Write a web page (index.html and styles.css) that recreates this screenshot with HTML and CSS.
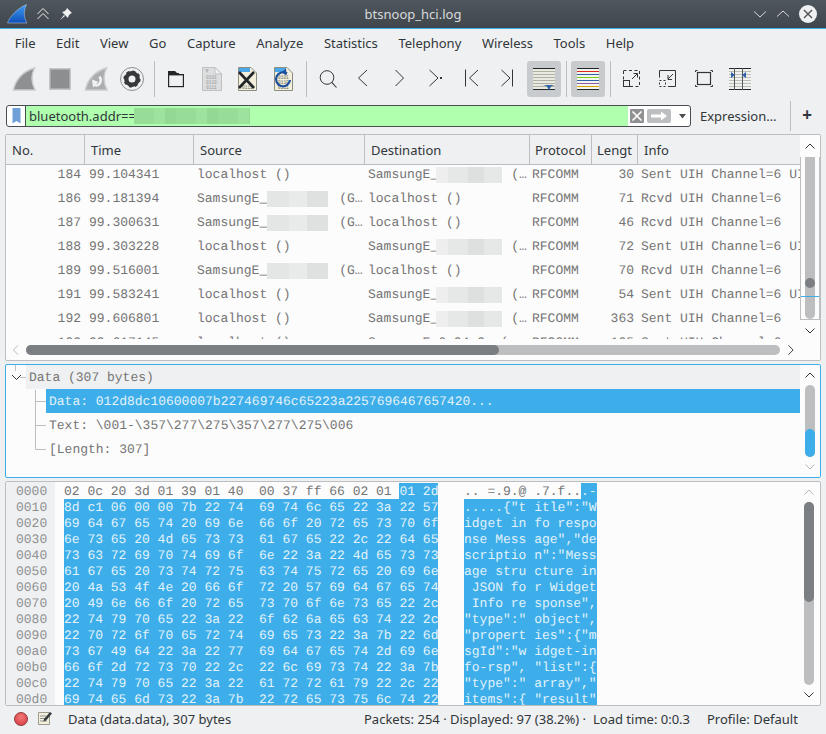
FILE: index.html
```html
<!DOCTYPE html>
<html>
<head>
<meta charset="utf-8">
<title>btsnoop_hci.log</title>
<link rel="stylesheet" href="styles.css">
</head>
<body>
<div class="window">
  <header class="titlebar">
    <div class="tb-left">
      <svg class="logo" width="22" height="24" viewBox="0 0 22 24"><defs><linearGradient id="lg" x1="0" y1="0" x2="0" y2="1"><stop offset="0" stop-color="#3f9cf0"/><stop offset="1" stop-color="#0f4fb8"/></linearGradient></defs><path d="M0.5 21 C3 14 11 6 19.5 2.500 C16.500 9 16.500 15 20 21 Z" fill="url(#lg)" stroke="#bcd3ee" stroke-width="0.5"/></svg>
      <svg width="14" height="14" viewBox="0 0 14 14"><path d="M0.5 7 L6 1.500 L11.500 7 M0.500 12 L6 6.500 L11.500 12" fill="none" stroke="#eff0f1" stroke-width="1"/></svg>
      <svg width="14" height="14" viewBox="0 0 14 14"><path d="M8 1 L13 6 L11 7 L9.500 9 L9 11 L3 5 L5 4.500 L7 3 Z M5 8 L1 13 L6 9 Z" fill="#eff0f1"/></svg>
    </div>
    <div class="tb-title">btsnoop_hci.log</div>
    <div class="tb-right">
      <svg width="14" height="14" viewBox="0 0 14 14"><path d="M1 4.500 L7 10 L13 4.500" fill="none" stroke="#d8dadb" stroke-width="1"/></svg>
      <svg width="14" height="14" viewBox="0 0 14 14"><path d="M1 9.500 L7 4 L13 9.500" fill="none" stroke="#d8dadb" stroke-width="1"/></svg>
      <svg width="18" height="18" viewBox="0 0 18 18"><circle cx="9" cy="9" r="9" fill="#eff0f1"/><path d="M5 5 L13 13 M13 5 L5 13" stroke="#4b5359" stroke-width="1.400"/></svg>
    </div>
  </header>

  <nav class="menubar">
    <span class="menu">File</span><span class="menu">Edit</span><span class="menu">View</span><span class="menu">Go</span><span class="menu">Capture</span><span class="menu">Analyze</span><span class="menu">Statistics</span><span class="menu">Telephony</span><span class="menu">Wireless</span><span class="menu">Tools</span><span class="menu">Help</span>
  </nav>

  <div class="toolbar">
    <span class="tool"><svg width="24" height="24" viewBox="0 0 24 24"><path d="M1.500 23 C3 14 10 4.500 22.500 1 C19 8 19.500 16 23 23 Z" fill="#8f9091" stroke="#c9cbcc" stroke-width="1.500"/></svg></span>
    <span class="tool"><svg width="24" height="24" viewBox="0 0 24 24"><rect x="1.750" y="1.750" width="20.500" height="20.500" fill="#8d8e8f" stroke="#c4c6c7" stroke-width="1.500"/></svg></span>
    <span class="tool"><svg width="24" height="24" viewBox="0 0 24 24"><path d="M1.500 23 C3 14 10 4.500 22.500 1 C19 8 19.500 16 23 23 Z" fill="#acadae" stroke="#c9cbcc" stroke-width="1.500"/><path d="M15.500 9.500 C18.500 14 15.500 20 10.500 18" fill="none" stroke="#f1f2f2" stroke-width="2.400"/><path d="M8 12.500 L14.500 15 L9 20.500 Z" fill="#f1f2f2"/></svg></span>
    <span class="tool"><svg width="24" height="24" viewBox="0 0 24 24"><circle cx="12" cy="12" r="11.500" fill="none" stroke="#8c8e8f"/><circle cx="12" cy="12" r="5.700" fill="none" stroke="#36393c" stroke-width="4.400"/><circle cx="12" cy="12" r="7.800" fill="none" stroke="#36393c" stroke-width="1.600" stroke-dasharray="3 3.125"/></svg></span>
    <span class="sep"></span>
    <span class="tool"><svg width="24" height="24" viewBox="0 0 24 24"><path d="M4 4 H11 L13 6 H15 V7 H20 V8.300 H4 Z" fill="#232629"/><rect x="4.600" y="7.600" width="14.800" height="12" fill="none" stroke="#232629" stroke-width="1.200"/></svg></span>
    <span class="tool"><svg width="24" height="24" viewBox="0 0 24 24"><path d="M2.500 0.500 H15 L21.500 7 V23.500 H2.500 Z" fill="#dcdedf" stroke="#bfc1c2"/><path d="M15 0.500 V7 H21.500 Z" fill="#f4f4f4" stroke="#bfc1c2"/><path d="M5 2 H9 L7 6 Z" fill="#b8babb"/><text class="bin" x="6" y="12">0101</text><text class="bin" x="6" y="17">0110</text><text class="bin" x="6" y="22">0111</text></svg></span>
    <span class="tool"><svg width="24" height="24" viewBox="0 0 24 24"><path d="M2.500 0.500 H15 L20.500 6 V23.500 H2.500 Z" fill="#f2f0dc" stroke="#8d8e80"/><path d="M3 1 H14 V5 H3 Z" fill="#4ba8ea"/><text class="bin dark" x="6" y="22">0111</text><path d="M3 5 L18 21 M18 5 L3 21" stroke="#232629" stroke-width="2.600"/></svg></span>
    <span class="tool"><svg width="24" height="24" viewBox="0 0 24 24"><path d="M2.500 0.500 H15 L20.500 6 V23.500 H2.500 Z" fill="#f2f0dc" stroke="#8d8e80"/><path d="M3 1 H14 V5 H3 Z" fill="#4ba8ea"/><text class="bin dark" x="6" y="12">0101</text><text class="bin dark" x="6" y="17">0110</text><text class="bin dark" x="6" y="22">0111</text><path d="M15 6.500 A7 7 0 1 0 18 13" fill="none" stroke="#1d4f9c" stroke-width="2.200"/><path d="M9.500 5.500 L14 1.500 L14.500 8.500 Z" fill="#1d4f9c"/></svg></span>
    <span class="sep"></span>
    <span class="tool"><svg width="24" height="24" viewBox="0 0 24 24"><circle cx="11" cy="10.500" r="6.800" fill="none" stroke="#31363b" stroke-width="1"/><path d="M15.800 15.300 L20.500 20.500" stroke="#31363b" stroke-width="1.100"/></svg></span>
    <span class="tool"><svg width="24" height="24" viewBox="0 0 24 24"><path d="M15 3 L6.500 11 L15 19" fill="none" stroke="#31363b"/></svg></span>
    <span class="tool"><svg width="24" height="24" viewBox="0 0 24 24"><path d="M7.500 3 L15.500 11 L7.500 19" fill="none" stroke="#31363b"/></svg></span>
    <span class="tool"><svg width="24" height="24" viewBox="0 0 24 24"><path d="M5.500 3 L14 11 L5.500 19" fill="none" stroke="#31363b"/><rect x="16" y="10" width="2" height="2" fill="#31363b"/></svg></span>
    <span class="tool"><svg width="24" height="24" viewBox="0 0 24 24"><path d="M18 3 L9.500 11 L18 19 M5.500 2.500 V19.500" fill="none" stroke="#31363b"/></svg></span>
    <span class="tool"><svg width="24" height="24" viewBox="0 0 24 24"><path d="M5.500 3 L14 11 L5.500 19 M16.500 2.500 V19.500" fill="none" stroke="#31363b"/></svg></span>
    <span class="tool on"><svg width="24" height="24" viewBox="0 0 24 24"><rect x="1" y="1" width="22" height="22" fill="#e9e9e2"/><path d="M1 1.500 H23 M1 22.500 H23" stroke="#232629"/><path d="M1 4.500 H23 M1 7.500 H23 M1 10.500 H23 M1 13.500 H23 M1 16.500 H23 M1 19.500 H23" stroke="#aeb0a2"/><path d="M11 18 H23 L19.500 19 L17 23 L14.500 19 Z" fill="#2f62a8"/></svg></span>
    <span class="sep"></span>
    <span class="tool on"><svg width="24" height="24" viewBox="0 0 24 24"><rect x="1" y="1" width="22" height="22" fill="#f4f4ef"/><path d="M1 1.500 H23 M1 22.500 H23" stroke="#232629"/><path d="M1 4.500 H23" stroke="#e0281f"/><path d="M1 7.500 H23" stroke="#2f62a8"/><path d="M1 10.500 H23" stroke="#7fcf1a"/><path d="M1 13.500 H23" stroke="#2f62a8"/><path d="M1 16.500 H23" stroke="#8a5aa6"/><path d="M1 19.500 H23" stroke="#d6a300"/></svg></span>
    <span class="sep"></span>
    <span class="tool"><svg width="24" height="24" viewBox="0 0 24 24"><rect x="3.500" y="3.500" width="16" height="16" fill="none" stroke="#31363b" stroke-dasharray="3 2.500"/><rect x="3" y="13" width="7" height="7" fill="#eff0f1"/><rect x="3.500" y="13.500" width="6" height="6" fill="none" stroke="#31363b"/><path d="M12 12 L17 7 M13.500 6.500 H17.500 V10.500" fill="none" stroke="#31363b"/></svg></span>
    <span class="tool"><svg width="24" height="24" viewBox="0 0 24 24"><path d="M3.500 10.500 V3.500 H19.500 V19.500 H12" fill="none" stroke="#31363b"/><rect x="3.500" y="13.500" width="6" height="6" fill="none" stroke="#31363b" stroke-dasharray="2 2"/><path d="M17 7 L12 12 M12 8 V12.500 H16" fill="none" stroke="#31363b"/></svg></span>
    <span class="tool"><svg width="24" height="24" viewBox="0 0 24 24"><rect x="5.500" y="5.500" width="13" height="12" fill="none" stroke="#31363b" stroke-width="1.200"/><path d="M3.500 5 V3.500 H5.500 M18.500 3.500 H20.500 V5 M20.500 18 V19.500 H18.500 M5.500 19.500 H3.500 V18" fill="none" stroke="#31363b"/></svg></span>
    <span class="tool"><svg width="24" height="24" viewBox="0 0 24 24"><path d="M1 1.500 H23 M1 22.500 H23" stroke="#232629"/><path d="M1 4.500 H23 M1 7.500 H23 M1 10.500 H23 M1 13.500 H23 M1 16.500 H23 M1 19.500 H23" stroke="#bcbeb0"/><path d="M6.500 1 V23 M14.500 1 V23" stroke="#55585a"/><path d="M3 5 L7 8 L3 11 Z M18 5 L14 8 L18 11 Z" fill="#2f62a8"/></svg></span>
  </div>

  <div class="filterbar">
    <div class="filter">
      <span class="bookmark"><svg width="9" height="16" viewBox="0 0 9 16"><path d="M0.500 0 H8.500 V15.500 L4.500 13 L0.500 15.500 Z" fill="#6e9fd6"/></svg></span>
      <div class="filter-text">bluetooth.addr==<span class="blur blur-g"></span></div>
      <span class="clear"><svg width="14" height="14" viewBox="0 0 14 14"><rect width="14" height="14" rx="1" fill="#909192"/><path d="M2.500 2.500 L11.500 11.500 M11.500 2.500 L2.500 11.500" stroke="#fff" stroke-width="1.600"/></svg></span>
      <span class="apply"><svg width="24" height="14" viewBox="0 0 24 14"><rect width="24" height="14" rx="2" fill="#bcbebf"/><path d="M4 5.500 H14 V2.500 L20 7 L14 11.500 V8.500 H4 Z" fill="#fff"/></svg></span>
      <span class="drop"><svg width="7" height="5" viewBox="0 0 7 5"><path d="M0 0 H7 L3.500 4.500 Z" fill="#4d4d4d"/></svg></span>
    </div>
    <span class="expr">Expression…</span>
    <span class="fsep"></span>
    <span class="plus">+</span>
  </div>

  <section class="pane packets">
    <div class="pk-main">
      <div class="grid head">
        <span>No.</span><span>Time</span><span>Source</span><span>Destination</span><span>Protocol</span><span>Lengt</span><span>Info</span>
      </div>
      <div class="pk-body">
        <div class="grid row first"><span>184</span><span>99.104341</span><span>localhost ()</span><span>SamsungE_<i class="blur b-d"></i>(…</span><span>RFCOMM</span><span>30</span><span>Sent UIH Channel=6 UIH</span></div>
        <div class="grid row"><span>186</span><span>99.181394</span><span>SamsungE_<i class="blur b-s"></i>(G…</span><span>localhost ()</span><span>RFCOMM</span><span>71</span><span>Rcvd UIH Channel=6</span></div>
        <div class="grid row"><span>187</span><span>99.300631</span><span>SamsungE_<i class="blur b-s"></i>(G…</span><span>localhost ()</span><span>RFCOMM</span><span>46</span><span>Rcvd UIH Channel=6</span></div>
        <div class="grid row"><span>188</span><span>99.303228</span><span>localhost ()</span><span>SamsungE_<i class="blur b-d"></i>(…</span><span>RFCOMM</span><span>72</span><span>Sent UIH Channel=6 UIH</span></div>
        <div class="grid row"><span>189</span><span>99.516001</span><span>SamsungE_<i class="blur b-s"></i>(G…</span><span>localhost ()</span><span>RFCOMM</span><span>70</span><span>Rcvd UIH Channel=6</span></div>
        <div class="grid row"><span>191</span><span>99.583241</span><span>localhost ()</span><span>SamsungE_<i class="blur b-d"></i>(…</span><span>RFCOMM</span><span>54</span><span>Sent UIH Channel=6 UIH</span></div>
        <div class="grid row"><span>192</span><span>99.606801</span><span>localhost ()</span><span>SamsungE_<i class="blur b-d"></i>(…</span><span>RFCOMM</span><span>363</span><span>Sent UIH Channel=6</span></div>
        <div class="grid row"><span>193</span><span>99.617145</span><span>localhost ()</span><span>SamsungE_6:04:0e (…</span><span>RFCOMM</span><span>105</span><span>Sent UIH Channel=6</span></div>
      </div>
      <div class="hscroll">
        <svg width="8" height="12" viewBox="0 0 8 12"><path d="M6.500 1 L1.500 6 L6.500 11" fill="none" stroke="#b5b7b8"/></svg>
        <div class="htrack"><div class="hthumb"></div></div>
        <svg width="8" height="12" viewBox="0 0 8 12"><path d="M1.500 1 L6.500 6 L1.500 11" fill="none" stroke="#31363b"/></svg>
      </div>
    </div>
    <div class="vscroll pk-v">
      <span class="arrow up"><svg width="12" height="8" viewBox="0 0 12 8"><path d="M1.500 6.500 L6 2 L10.500 6.500" fill="none" stroke="#31363b"/></svg></span>
      <div class="pk-track"><div class="bar"><span class="dot"></span></div><span class="mark"></span></div>
      <span class="arrow down"><svg width="12" height="8" viewBox="0 0 12 8"><path d="M1.500 1.500 L6 6 L10.500 1.500" fill="none" stroke="#31363b"/></svg></span>
    </div>
  </section>

  <section class="pane details">
    <div class="tree">
      <svg class="lines" width="46" height="113" viewBox="0 0 46 113"><path d="M9.500 0 V6 M14 12.500 H20 M29.500 25 V84.500 M29.500 36.500 H40 M29.500 60.500 H40 M29.500 84.500 H40" fill="none" stroke="#bcbebf"/><path d="M6 10 L10.500 14.500 L15 10" fill="none" stroke="#31363b"/></svg>
      <div class="node parent">Data (307 bytes)</div>
      <div class="node sel">Data: 012d8dc10600007b227469746c65223a2257696467657420...</div>
      <div class="node">Text: \001-\357\277\275\357\277\275\006</div>
      <div class="node">[Length: 307]</div>
    </div>
    <div class="vscroll d-v">
      <span class="arrow"><svg width="12" height="8" viewBox="0 0 12 8"><path d="M1.500 6.500 L6 2 L10.500 6.500" fill="none" stroke="#31363b"/></svg></span>
      <div class="d-track"><div class="d-thumb"></div></div>
      <span class="arrow"><svg width="12" height="8" viewBox="0 0 12 8"><path d="M1.500 1.500 L6 6 L10.500 1.500" fill="none" stroke="#b5b7b8"/></svg></span>
    </div>
  </section>

  <section class="pane hex">
    <div class="offsets">
      <div>0000</div><div>0010</div><div>0020</div><div>0030</div><div>0040</div><div>0050</div><div>0060</div><div>0070</div><div>0080</div><div>0090</div><div>00a0</div><div>00b0</div><div>00c0</div><div>00d0</div>
    </div>
    <div class="bytes">
      <div>02 0c 20 3d 01 39 01 40  00 37 ff 66 02 01 <b>01 2d</b></div>
      <div><b>8d c1 06 00 00 7b 22 74  69 74 6c 65 22 3a 22 57</b></div>
      <div><b>69 64 67 65 74 20 69 6e  66 6f 20 72 65 73 70 6f</b></div>
      <div><b>6e 73 65 20 4d 65 73 73  61 67 65 22 2c 22 64 65</b></div>
      <div><b>73 63 72 69 70 74 69 6f  6e 22 3a 22 4d 65 73 73</b></div>
      <div><b>61 67 65 20 73 74 72 75  63 74 75 72 65 20 69 6e</b></div>
      <div><b>20 4a 53 4f 4e 20 66 6f  72 20 57 69 64 67 65 74</b></div>
      <div><b>20 49 6e 66 6f 20 72 65  73 70 6f 6e 73 65 22 2c</b></div>
      <div><b>22 74 79 70 65 22 3a 22  6f 62 6a 65 63 74 22 2c</b></div>
      <div><b>22 70 72 6f 70 65 72 74  69 65 73 22 3a 7b 22 6d</b></div>
      <div><b>73 67 49 64 22 3a 22 77  69 64 67 65 74 2d 69 6e</b></div>
      <div><b>66 6f 2d 72 73 70 22 2c  22 6c 69 73 74 22 3a 7b</b></div>
      <div><b>22 74 79 70 65 22 3a 22  61 72 72 61 79 22 2c 22</b></div>
      <div><b>69 74 65 6d 73 22 3a 7b  22 72 65 73 75 6c 74 22</b></div>
    </div>
    <div class="ascii">
      <div>.. =.9.@ .7.f..<b>.-</b></div>
      <div><b>.....{"t itle":"W</b></div>
      <div><b>idget in fo respo</b></div>
      <div><b>nse Mess age","de</b></div>
      <div><b>scriptio n":"Mess</b></div>
      <div><b>age stru cture in</b></div>
      <div><b> JSON fo r Widget</b></div>
      <div><b> Info re sponse",</b></div>
      <div><b>"type":" object",</b></div>
      <div><b>"propert ies":{"m</b></div>
      <div><b>sgId":"w idget-in</b></div>
      <div><b>fo-rsp", "list":{</b></div>
      <div><b>"type":" array","</b></div>
      <div><b>items":{ "result"</b></div>
    </div>
    <div class="vscroll h-v">
      <span class="arrow"><svg width="12" height="8" viewBox="0 0 12 8"><path d="M1.500 6.500 L6 2 L10.500 6.500" fill="none" stroke="#b5b7b8"/></svg></span>
      <div class="h-track"><div class="h-thumb"></div></div>
      <span class="arrow"><svg width="12" height="8" viewBox="0 0 12 8"><path d="M1.500 1.500 L6 6 L10.500 1.500" fill="none" stroke="#31363b"/></svg></span>
    </div>
  </section>

  <footer class="status">
    <span class="rec"></span>
    <svg class="edit" width="16" height="16" viewBox="0 0 16 16"><path d="M1.500 2.500 H12.500 V14.500 H1.500 Z" fill="#f2f0dc" stroke="#9a9b8e"/><path d="M3 6 H9 M3 8.500 H8 M3 11 H10" stroke="#8f9092"/><path d="M7 9 L13 2 L15 3.500 L9 10.500 L6.500 11.500 Z" fill="#31363b"/></svg>
    <span class="st-msg">Data (data.data), 307 bytes</span>
    <span class="st-pk">Packets: 254 · Displayed: 97 (38.2%) ·</span>
    <span class="st-load">Load time: 0:0.3</span>
    <span class="st-prof">Profile: Default</span>
  </footer>
</div>
</body>
</html>
```

FILE: styles.css
```css
* { box-sizing: border-box; }
html, body { margin: 0; padding: 0; }
body { font-family: "Noto Sans", sans-serif; font-size: 13px; color: #31363b; background: #eff0f1; }
.window { width: 826px; height: 734px; display: flex; flex-direction: column; overflow: hidden; background: #eff0f1; }

.titlebar { height: 29px; flex: none; display: flex; align-items: center; background: linear-gradient(#4f575e, #3f464c); border-bottom: 1px solid #3daee9; color: #d8dadc; }
.tb-left { display: flex; align-items: center; padding-left: 7px; gap: 8px; }
.tb-title { flex: 1; text-align: center; }
.tb-right { display: flex; align-items: center; gap: 9px; padding-right: 9px; }

.menubar { height: 31px; flex: none; display: flex; padding: 0 0 2px 4.400px; align-items: center; }
.menu { padding: 0 10.300px; line-height: 29px; }

.toolbar { height: 41px; flex: none; display: flex; align-items: flex-start; padding: 1px 0 0 6px; }
.tool { width: 36px; height: 36px; flex: none; display: flex; align-items: center; justify-content: center; }
.tool.on { background: #c8cbcd; border-radius: 3px; width: 34px; margin: 0 1px; }
.sep { width: 8px; height: 36px; flex: none; display: flex; justify-content: center; }
.sep::before { content: ""; width: 1px; height: 36px; background: #bcbebf; }

.filterbar { height: 33px; flex: none; display: flex; align-items: flex-start; padding: 4px 0 0 6px; }
.filter { width: 685px; height: 22px; flex: none; display: flex; align-items: stretch; border: 1px solid #4a4e52; border-radius: 3px; background: #fff; overflow: hidden; }
.bookmark { width: 19px; display: flex; align-items: center; justify-content: center; border-right: 1px solid #4a4e52; flex: none; }
.filter-text { width: 602px; background: #afffaf; padding-left: 3px; line-height: 20px; display: flex; align-items: center; flex: none; }
.blur { display: inline-block; font-style: normal; }
.blur-g { width: 116px; height: 16px; margin-left: -2px; background: repeating-linear-gradient(90deg, #97dc97 0 20px, #9de39d 20px 31px, #93d893 31px 42px); }
.clear { width: 18px; display: flex; align-items: center; justify-content: center; flex: none; }
.apply { width: 26px; display: flex; align-items: center; justify-content: center; flex: none; }
.drop { flex: 1; display: flex; align-items: center; justify-content: flex-end; padding-right: 4px; }
.expr { width: 99px; padding-left: 9px; line-height: 22px; flex: none; }
.fsep { width: 1px; height: 30px; margin-top: -4px; background: #bcbebf; flex: none; }
.plus { width: 32px; text-align: center; font-size: 17px; line-height: 20px; font-weight: 700; flex: none; }

.pane { margin: 0 5px; background: #fcfcfc; border: 1px solid #bcbebf; border-radius: 2px; display: flex; flex: none; position: relative; overflow: hidden; }
.vscroll { width: 20px; flex: none; display: flex; flex-direction: column; align-items: center; background: #fcfcfc; }
.arrow { height: 20px; display: flex; align-items: center; justify-content: center; flex: none; }

.pk-body, .tree, .hex { font-family: "Liberation Mono", monospace; color: #747474; text-rendering: geometricPrecision; }

.packets { height: 227px; }
.pk-main { width: 794px; flex: none; display: flex; flex-direction: column; }
.grid { display: grid; grid-template-columns: 79px 109px 171px 165px 62px 46px 162px; }
.head { height: 30px; background: #eff0f1; border-bottom: 1px solid #bcbebf; flex: none; }
.head span { padding-left: 6px; line-height: 31px; border-right: 1px solid #bcbebf; white-space: nowrap; overflow: hidden; }
.head span:nth-child(5), .head span:nth-child(6) { padding-left: 5px; }
.head span:last-child { border-right: 0; }
.pk-body { height: 174px; overflow: hidden; flex: none; }
.row { height: 24px; line-height: 26px; white-space: pre; }
.row.first { height: 21px; line-height: 20px; }
.row span { overflow: hidden; padding-left: 3px; }
.row span:nth-child(1) { text-align: right; padding: 0 4px 0 0; }
.row span:nth-child(2) { padding-left: 4px; }
.row span:nth-child(5) { padding-left: 2px; }
.row span:nth-child(6) { text-align: right; padding: 0 4px 0 0; }
.b-s { width: 61px; height: 16px; margin-right: 11px; vertical-align: middle; background: repeating-linear-gradient(90deg, #e4e5e5 0 22px, #e9eaea 22px 40px, #dfe0e0 40px 61px); }
.b-d { width: 66px; height: 16px; margin: 0 9px 0 -2px; vertical-align: middle; background: repeating-linear-gradient(90deg, #eeeeee 0 12px, #e6e7e7 12px 32px, #dedfdf 32px 48px, #e6e7e7 48px 66px); }
.hscroll { flex: 1; display: flex; align-items: center; padding: 0 6px; gap: 6px; }
.htrack { width: 754px; height: 10px; border-radius: 5px; background: #bcbebf; flex: none; margin-right: 1px; }
.hthumb { width: 473px; height: 10px; border-radius: 5px; background: #7b7e82; }

.pk-v { position: relative; }
.pk-v .arrow.up { height: 22px; }
.pk-track { width: 20px; height: 163px; flex: none; border: 1px solid #bcbebf; border-top: 0; display: flex; justify-content: center; position: relative; background: #fcfcfc; }
.bar { width: 10px; height: 162px; border-radius: 0 0 5px 5px; background: #bcbebf; position: relative; }
.dot { position: absolute; left: 0; top: 121px; width: 10px; height: 10px; border-radius: 50%; background: #7b7e82; }
.mark { position: absolute; left: 0; right: 0; top: 139px; height: 1px; background: #3daee9; }
.pk-v .arrow.down { height: 21px; }

.details { height: 114px; margin-top: 3px; border-color: #3daee9; }
.tree { width: 794px; flex: none; position: relative; }
.lines { position: absolute; left: 0; top: 0; z-index: 1; }
.node { height: 24px; line-height: 26px; padding-left: 43px; white-space: pre; }
.node.parent { margin-left: 20px; padding-left: 3px; background: #eff0f1; }
.node.sel { margin-left: 40px; padding-left: 3px; background: #3daee9; color: #e2f2fb; }
.d-track { width: 10px; height: 72px; border-radius: 5px; background: #bcbebf; flex: none; display: flex; align-items: flex-end; }
.d-thumb { width: 10px; height: 28px; border-radius: 5px; background: #3daee9; }

.hex { height: 225px; margin-top: 3px; padding-top: 1px; }
.hex b { display: inline-block; height: 16px; font-weight: 400; background: #3daee9; color: #e2f2fb; vertical-align: top; }
.hex .offsets div, .hex .bytes div, .hex .ascii div { height: 16px; line-height: 18px; white-space: pre; }
.offsets { width: 49px; margin-top: -1px; padding: 1px 0 0 10px; background: #eff0f1; color: #8f9192; flex: none; }
.bytes { width: 383px; padding-left: 9px; flex: none; }
.ascii { width: 341px; padding-left: 26px; flex: none; }
.h-v { margin-left: 20px; margin-top: -1px; }
.h-track { width: 10px; height: 183px; border-radius: 5px; background: #bcbebf; flex: none; }
.h-thumb { width: 10px; height: 100px; border-radius: 5px; background: #7b7e82; }

.status { flex: 1; display: flex; align-items: center; padding: 0 0 2px 14px; }
.rec { width: 14px; height: 14px; border-radius: 50%; background: radial-gradient(circle at 50% 35%, #f07a7a, #d9343a); border: 1px solid #8e3a3d; flex: none; }
.edit { margin-left: 9px; margin-top: -2px; flex: none; }
.st-msg { margin-left: 15px; width: 296px; flex: none; }
.st-pk { width: 229px; flex: none; }
.st-load { width: 114px; flex: none; }
.st-prof { flex: none; }
.bin { font-family: "Liberation Mono", monospace; font-size: 4.500px; fill: #9a9c9d; }
.bin.dark { fill: #6a6c60; }
```
